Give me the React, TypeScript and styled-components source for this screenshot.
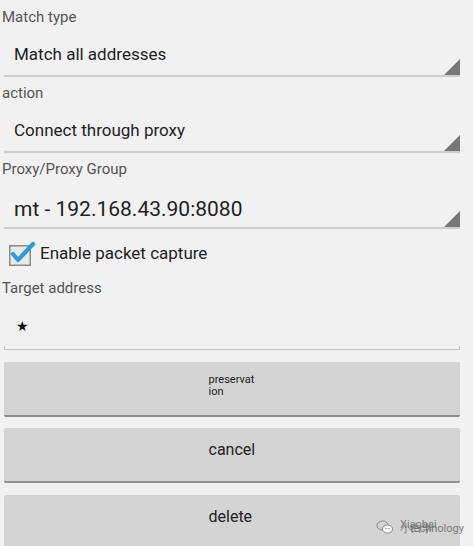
import React from 'react';
import styled, { createGlobalStyle } from 'styled-components';

const GlobalStyle = createGlobalStyle`
  html, body {
    margin: 0;
    padding: 0;
    height: 546px;
    background: #f1f1f1;
    font-family: Roboto, 'Noto Sans', sans-serif;
    overflow: hidden;
  }
`;

const Page = styled.div`
  display: flex;
  flex-direction: column;
  width: 473px;
  padding: 0 13px 0 4px;
  box-sizing: border-box;
`;

const Label = styled.div<{ $top?: number }>`
  margin-left: -2px;
  padding-top: ${(p) => p.$top ?? 4}px;
  font-size: 15px;
  line-height: 24px;
  color: #555;
`;

const Spinner = styled.div<{ $pad: number }>`
  display: flex;
  align-items: flex-end;
  justify-content: space-between;
  height: 48px;
  flex-shrink: 0;
  box-sizing: border-box;
  border-bottom: 2px solid #cdcdcd;
  padding-left: 10px;
  padding-bottom: ${(p) => p.$pad}px;
  position: relative;
`;

const SpinnerValue = styled.span<{ $large?: boolean }>`
  font-size: ${(p) => (p.$large ? 21 : 17)}px;
  line-height: ${(p) => (p.$large ? 28 : 24)}px;
  color: #1e1e1e;
`;

const Arrow = styled.svg`
  position: absolute;
  right: 0;
  bottom: 0;
`;

const CheckRow = styled.label`
  display: flex;
  align-items: center;
  gap: 0;
  margin-top: 13px;
  height: 22px;
  font-size: 17px;
  color: #1e1e1e;
`;

const TextInput = styled.div`
  position: relative;
  display: flex;
  align-items: flex-start;
  height: 50px;
  flex-shrink: 0;
  box-sizing: border-box;
  padding: 18px 0 0 12px;
  font-size: 14px;
  line-height: 16px;
  color: #111;
`;

const InputLine = styled.div`
  position: absolute;
  left: 0;
  right: 0;
  bottom: 0;
  height: 4px;
  border: 1px solid #c4c4c4;
  border-top: none;
  box-sizing: border-box;
`;

const Button = styled.div<{ $gap: number }>`
  position: relative;
  display: flex;
  justify-content: center;
  margin-top: ${(p) => p.$gap}px;
  height: 55px;
  flex-shrink: 0;
  box-sizing: border-box;
  padding-top: 12px;
  background: #d4d4d4;
  border-bottom: 2px solid #8e8e8e;
  border-radius: 2px;
`;

const ButtonText = styled.span<{ $small?: boolean }>`
  width: 47px;
  text-align: left;
  word-break: break-all;
  font-size: ${(p) => (p.$small ? 11 : 16)}px;
  line-height: ${(p) => (p.$small ? 12 : 20)}px;
  color: #222;
`;

const Watermark = styled.div`
  position: absolute;
  right: 2px;
  top: 24px;
  display: flex;
  align-items: center;
  gap: 6px;
  color: #6d6d6d;
`;

const WatermarkText = styled.div`
  position: relative;
  width: 58px;
  height: 16px;
  font-size: 11px;
  line-height: 11px;
`;

const Layer = styled.span<{ $top: number; $left: number }>`
  position: absolute;
  top: ${(p) => p.$top}px;
  left: ${(p) => p.$left}px;
  white-space: nowrap;
  opacity: 0.85;
`;

const SpinnerArrow = () => (
  <Arrow width="16" height="16" viewBox="0 0 16 16">
    <polygon points="16,0 16,16 0,16" fill="#777" />
  </Arrow>
);

const CheckBox = () => (
  <svg width="31" height="26" viewBox="0 0 31 26" style={{ marginLeft: 5, marginTop: 2 }}>
    <rect x="0.75" y="4.75" width="20.5" height="19.5" fill="#e9e9e9" stroke="#8a8a8a" strokeWidth="1.5" />
    <path d="M4 13 L9 19 L24 3" fill="none" stroke="#2f9ad6" strokeWidth="4.2" strokeLinecap="round" strokeLinejoin="round" />
  </svg>
);

const WeChatIcon = () => (
  <svg width="18" height="14" viewBox="0 0 18 14">
    <ellipse cx="6.5" cy="5.5" rx="5.5" ry="4.5" fill="none" stroke="#888" strokeWidth="1" />
    <ellipse cx="11.5" cy="9" rx="5" ry="4" fill="#fff" stroke="#888" strokeWidth="1" />
    <circle cx="10" cy="8.5" r="0.8" fill="#888" />
    <circle cx="13" cy="8.5" r="0.8" fill="#888" />
  </svg>
);

export default function App() {
  return (
    <>
      <GlobalStyle />
      <Page>
        <Label $top={5}>Match type</Label>
        <Spinner $pad={9}>
          <SpinnerValue>Match all addresses</SpinnerValue>
          <SpinnerArrow />
        </Spinner>

        <Label>action</Label>
        <Spinner $pad={9}>
          <SpinnerValue>Connect through proxy</SpinnerValue>
          <SpinnerArrow />
        </Spinner>

        <Label>Proxy/Proxy Group</Label>
        <Spinner $pad={4}>
          <SpinnerValue $large>mt - 192.168.43.90:8080</SpinnerValue>
          <SpinnerArrow />
        </Spinner>

        <CheckRow>
          <CheckBox />
          Enable packet capture
        </CheckRow>

        <Label $top={12}>Target address</Label>
        <TextInput>
          ★
          <InputLine />
        </TextInput>

        <Button $gap={12}>
          <ButtonText $small>preservation</ButtonText>
        </Button>
        <Button $gap={11}>
          <ButtonText>cancel</ButtonText>
        </Button>
        <Button $gap={12}>
          <ButtonText>delete</ButtonText>
          <Watermark>
            <WeChatIcon />
            <WatermarkText>
              <Layer $top={0} $left={0}>Xiaobai</Layer>
              <Layer $top={4} $left={0}>小白学</Layer>
              <Layer $top={4} $left={10}>technology</Layer>
            </WatermarkText>
          </Watermark>
        </Button>
      </Page>
    </>
  );
}
